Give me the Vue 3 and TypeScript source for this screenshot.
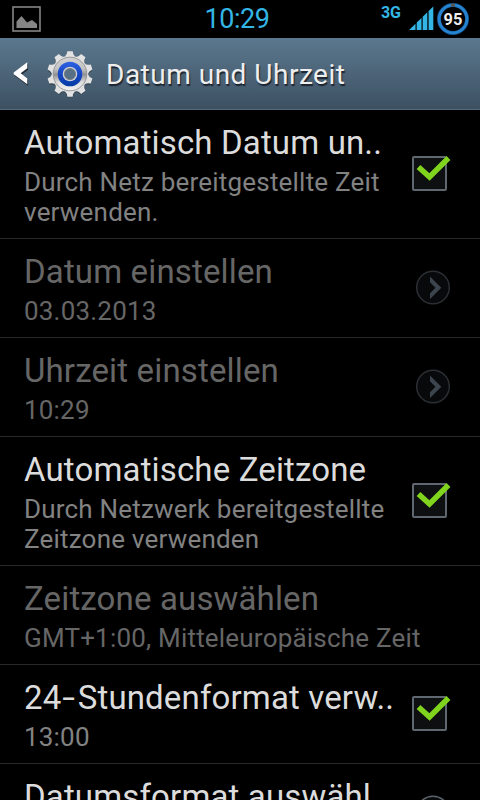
<script setup lang="ts">
interface Row {
  title: string
  lines: string[]
  control?: 'check' | 'arrow'
  disabled?: boolean
  cls: string
}

const rows: Row[] = [
  { title: 'Automatisch Datum un..', lines: ['Durch Netz bereitgestellte Zeit', 'verwenden.'], control: 'check', cls: 'auto-date' },
  { title: 'Datum einstellen', lines: ['03.03.2013'], control: 'arrow', disabled: true, cls: 'set-date' },
  { title: 'Uhrzeit einstellen', lines: ['10:29'], control: 'arrow', disabled: true, cls: 'set-time' },
  { title: 'Automatische Zeitzone', lines: ['Durch Netzwerk bereitgestellte', 'Zeitzone verwenden'], control: 'check', cls: 'auto-zone' },
  { title: 'Zeitzone auswählen', lines: ['GMT+1:00, Mitteleuropäische Zeit'], disabled: true, cls: 'set-zone' },
  { title: '24-Stundenformat verw..', lines: ['13:00'], control: 'check', cls: 'hours' },
  { title: 'Datumsformat auswähl', lines: [], control: 'arrow', cls: 'format' },
]

const teeth = Array.from({ length: 10 }, (_, i) => i * 36)

// Splits a title so that its hyphen can be drawn wider.
const parts = (title: string): string[] => title.split(/(-)/)
</script>

<template>
  <div class="screen">
    <header class="status">
      <svg class="picture" width="29" height="27" viewBox="0 0 29 27">
        <rect x="1" y="1" width="27" height="24" fill="none" stroke="#858585" stroke-width="1.6" />
        <path d="M4.500 22V15.500L9.500 10L15 16.500L20 14L25 18V22Z" fill="#858585" />
      </svg>
      <span class="clock">10:29</span>
      <div class="indicators">
        <span class="network">3G</span>
        <svg class="signal" width="26" height="24" viewBox="0 0 26 24">
          <path d="M1 24L7.500 17.700V24ZM8.700 24V16.500L13.500 11.900V24ZM14.700 24V10.700L19.300 6.200V24ZM20.600 24V5L25.300 .500V24Z" fill="#33b5e5" />
        </svg>
        <svg class="battery" width="34" height="34" viewBox="0 0 34 34">
          <circle cx="17" cy="17" r="14" fill="none" stroke="#115088" stroke-width="4" />
          <circle cx="17" cy="17" r="13.900" fill="none" stroke="#2583d0" stroke-width="2.800" />
          <path d="M15 3.200H19" stroke="#555" stroke-width="3" />
          <text x="7.600" y="23" textLength="18.800" lengthAdjust="spacingAndGlyphs" class="level">95</text>
        </svg>
      </div>
    </header>

    <div class="bar">
      <svg class="back" width="16" height="26" viewBox="0 0 16 26">
        <path d="M14.300 1.500V7.500L7.700 12.500L14.300 18V23.500L.700 13.500V11.700Z" fill="#1d2a34" transform="translate(.8 1.2)" />
        <path d="M14.300 1.300V7.300L7.700 12.300L14.300 17.500V23.300L.700 13.200V11.500Z" fill="#fff" />
      </svg>
      <svg class="gear" width="50" height="50" viewBox="-25 -25 50 50">
        <defs>
          <linearGradient id="metal" x1="0" y1="0" x2="0" y2="1">
            <stop offset="0" stop-color="#d2d2d2" />
            <stop offset=".35" stop-color="#c4c4c4" />
            <stop offset=".52" stop-color="#929292" />
            <stop offset=".75" stop-color="#dedede" />
            <stop offset="1" stop-color="#f2f2f2" />
          </linearGradient>
          <linearGradient id="blue" x1="0" y1="0" x2="0" y2="1">
            <stop offset="0" stop-color="#2e63e2" />
            <stop offset=".5" stop-color="#1747c4" />
            <stop offset="1" stop-color="#053ca4" />
          </linearGradient>
        </defs>
        <g fill="#344652" transform="translate(0 1)">
          <circle r="18.500" />
          <path v-for="a in teeth" :key="a" d="M-4.500 -17.500L-2.800 -22.500H2.800L4.500 -17.500Z" :transform="`rotate(${a})`" />
        </g>
        <g fill="#e2e2e2">
          <circle r="18.300" />
          <path v-for="a in teeth" :key="a" d="M-5 -17.500Q-3 -19 -2.700 -22.700H2.700Q3 -19 5 -17.500Z" :transform="`rotate(${a})`" />
        </g>
        <circle r="16.800" fill="url(#metal)" stroke="#919191" stroke-width=".9" />
        <circle r="12.300" fill="url(#blue)" />
        <circle r="7.300" fill="#cbd0d8" />
        <circle r="5.600" fill="#587086" stroke="#777" stroke-width=".8" />
      </svg>
      <h1>Datum und Uhrzeit</h1>
    </div>

    <main>
      <section v-for="row in rows" :key="row.title" class="row" :class="[row.cls, { disabled: row.disabled }]">
        <div class="copy">
          <h2><span v-for="(part, i) in parts(row.title)" :key="i" :class="{ hyphen: part === '-' }">{{ part }}</span></h2>
          <p v-for="line in row.lines" :key="line">{{ line }}</p>
        </div>
        <svg v-if="row.control === 'check'" class="control" width="42" height="38" viewBox="0 0 42 38">
          <rect x="2" y="2" width="33" height="33" rx="1" fill="#0d0f11" stroke="#5f6870" stroke-width="2" />
          <path d="M7.500 12L18.500 22L37.500 3" fill="none" stroke="#80d41d" stroke-width="5.500" />
        </svg>
        <svg v-else-if="row.control === 'arrow'" class="control" width="42" height="38" viewBox="0 0 42 38">
          <circle class="ring" cx="22" cy="18.500" r="16.300" />
          <path class="chevron" d="M19 7.500L30.300 18.700L19 30V24.200L24.500 18.700L19 13.200Z" />
        </svg>
      </section>
    </main>
  </div>
</template>

<style>
html, body { margin: 0; background: #000; }
body { overflow: hidden; }
</style>

<style scoped>
.screen {
  width: 480px;
  height: 800px;
  overflow: hidden;
  background: #000;
  font-family: Roboto, "Liberation Sans", sans-serif;
}
.status {
  display: grid;
  grid-template-columns: 1fr auto 1fr;
  height: 38px;
  color: #33b5e5;
}
.picture { margin: 6px 0 0 12px; }
.clock { font-size: 27px; line-height: 39px; letter-spacing: -.4px; margin-left: -6px; }
.indicators { display: flex; justify-content: flex-end; }
.network { font-size: 16px; font-weight: 700; line-height: 18px; margin: 4px 7px 0 0; }
.signal { margin-top: 6px; }
.battery { margin: 2px 10px 0 2px; }
.level { font: 700 16.500px Roboto, sans-serif; fill: #eee; }
.bar {
  display: flex;
  align-items: center;
  box-sizing: border-box;
  height: 72px;
  padding-left: 13px;
  background: linear-gradient(#5b788e, #3d5062);
  border-bottom: 1px solid #56697a;
}
.back { margin-right: 16px; }
.gear { margin-right: 11px; }
h1, h2, p { margin: 0; font-weight: 400; white-space: nowrap; }
h1 { color: #eee; font-size: 28px; line-height: 36px; letter-spacing: .5px; text-shadow: 1px 2px 1px #1a242e; padding-top: 2px; }
.row {
  display: flex;
  align-items: center;
  justify-content: space-between;
  box-sizing: border-box;
  padding: 13px 27px 11px 24px;
  border-bottom: 1px solid #292929;
}
.copy { width: 380px; flex: none; }
h2 { color: #dcdcdc; font-size: 33px; line-height: 40px; letter-spacing: .15px; margin-bottom: 4px; }
.hyphen { display: inline-block; transform: scaleX(1.4); margin: 0 4px 0 3px; }
p { color: #828282; font-size: 26px; line-height: 30px; letter-spacing: .2px; }
.format { min-height: 99px; align-items: flex-start; }
.format .control { margin-top: 17px; }
.disabled h2 { color: #666; }
.disabled p { color: #666; }
.control { flex: none; margin: -2px 0 0 -20px; }
.ring { fill: #08090b; stroke: #59616a; stroke-width: 1.500; }
.chevron { fill: #8a949e; }
.disabled .ring { stroke: #2b2e32; }
.disabled .chevron { fill: #3c444d; }
</style>
